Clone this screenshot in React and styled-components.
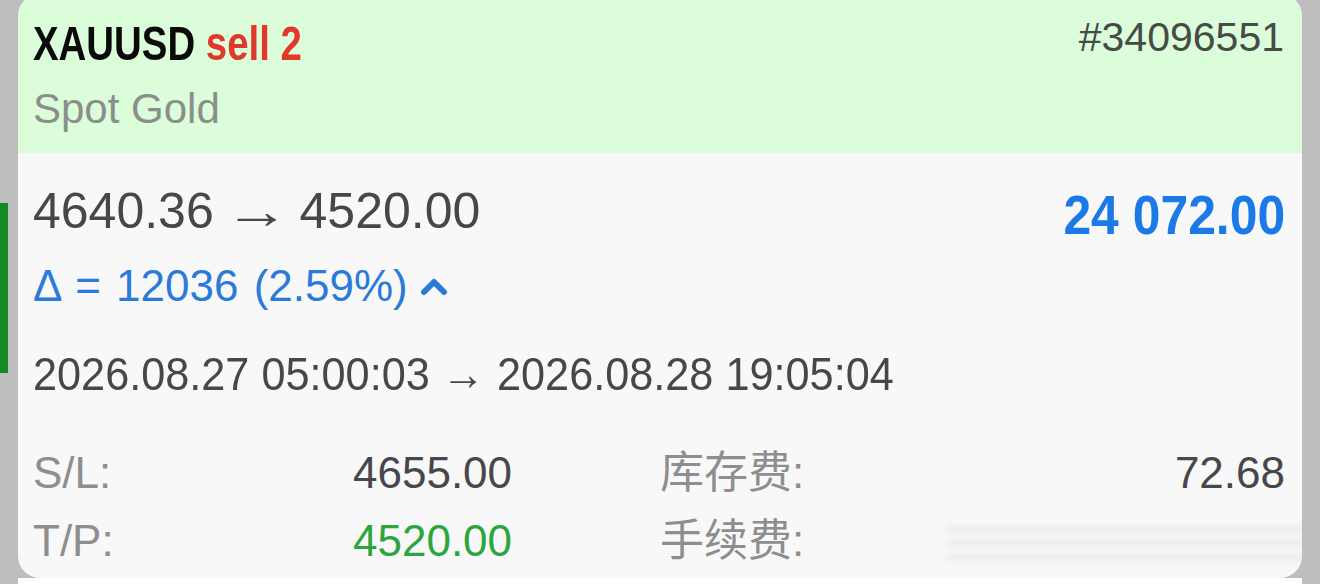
import React from "react";
import styled, { createGlobalStyle } from "styled-components";

const GlobalStyle = createGlobalStyle`
  html, body {
    margin: 0;
    padding: 0;
    background: #bebebe;
    overflow: hidden;
  }
`;

const Page = styled.div`
  display: flex;
  width: 1320px;
  height: 584px;
  overflow: hidden;
  font-family: "Liberation Sans", Arial, sans-serif;
`;

const SideStrip = styled.div`
  width: 18px;
  flex: none;
`;

const StatusBar = styled.div`
  width: 8px;
  height: 170px;
  margin-top: 203px;
  background: #138a24;
`;

const Column = styled.div`
  width: 1284px;
  flex: none;
  display: flex;
  flex-direction: column;
`;

const Card = styled.div`
  margin-top: -6px;
  height: 584px;
  flex: none;
  border-radius: 22px;
  overflow: hidden;
  background: #f8f8f8;
  display: flex;
  flex-direction: column;
`;

const Header = styled.div`
  background: #dcfdd9;
  height: 159px;
  flex: none;
  box-sizing: border-box;
  padding: 22px 18px 0 15px;
  display: flex;
  justify-content: space-between;
`;

const TitleBlock = styled.div`
  display: flex;
  flex-direction: column;
`;

const Title = styled.div`
  display: inline-block;
  font-weight: 700;
  font-size: 48px;
  line-height: 56px;
  color: #0a0a0a;
  white-space: nowrap;
  transform: scaleX(0.8);
  transform-origin: left center;
`;

const Side = styled.span`
  color: #e0392b;
`;

const Subtitle = styled.div`
  font-size: 42px;
  line-height: 50px;
  color: #8b8f8b;
  margin-top: 12px;
`;

const Ticket = styled.div`
  font-size: 41px;
  line-height: 50px;
  color: #454b45;
  margin-top: -4px;
`;

const Body = styled.div`
  padding: 30px 17px 0 15px;
  display: flex;
  flex-direction: column;
`;

const PriceRow = styled.div`
  display: flex;
  justify-content: space-between;
  align-items: flex-start;
`;

const Prices = styled.div`
  font-size: 50px;
  line-height: 56px;
  color: #47474b;
  white-space: nowrap;
`;

const Arrow = styled.span`
  display: inline-block;
  margin: 0 4px;
  transform: scaleX(1.3);
`;

const Profit = styled.div`
  font-weight: 700;
  font-size: 56px;
  line-height: 64px;
  color: #1b7ae6;
  white-space: nowrap;
  transform: scaleX(0.89);
  transform-origin: right center;
`;

const Delta = styled.div`
  display: flex;
  align-items: center;
  gap: 12px;
  font-size: 44px;
  line-height: 50px;
  word-spacing: 3px;
  color: #2a7bd9;
  margin-top: 14px;
`;

const Times = styled.div`
  display: inline-block;
  font-size: 46px;
  line-height: 50px;
  color: #47474b;
  white-space: nowrap;
  transform: scaleX(0.94);
  transform-origin: left center;
  margin-top: 38px;
`;

const Details = styled.div`
  display: grid;
  grid-template-columns: 320px 307px 1fr auto;
  align-items: center;
  margin-top: 50px;
  row-gap: 20px;
`;

const Label = styled.div`
  font-family: "Liberation Sans", "Noto Sans CJK SC", sans-serif;
  font-size: 44px;
  line-height: 48px;
  color: #8e8e8e;
`;

const Value = styled.div`
  font-size: 44px;
  line-height: 48px;
  color: ${(p) => p.$color || "#47474b"};
  text-align: ${(p) => (p.$right ? "right" : "left")};
`;

const Blurred = styled.div`
  width: 360px;
  height: 44px;
  margin-right: -22px;
  background: repeating-linear-gradient(
    180deg,
    #f8f8f8 0px,
    #f8f8f8 7px,
    #d4d4d4 10px,
    #f8f8f8 14px
  );
  filter: blur(3px);
  opacity: 0.7;
`;

const NextItem = styled.div`
  height: 20px;
  background: #ffffff;
  padding-left: 20px;
  font-size: 40px;
  line-height: 40px;
  color: #111;
  overflow: hidden;
`;

function Chevron() {
  return (
    <svg width="28" height="20" viewBox="0 0 28 20">
      <polyline
        points="4,16 14,6 24,16"
        fill="none"
        stroke="#2a7bd9"
        strokeWidth="6"
        strokeLinecap="round"
        strokeLinejoin="round"
      />
    </svg>
  );
}

export default function App() {
  return (
    <>
      <GlobalStyle />
      <Page>
        <SideStrip>
          <StatusBar />
        </SideStrip>
        <Column>
          <Card>
            <Header>
              <TitleBlock>
                <Title>
                  XAUUSD <Side>sell 2</Side>
                </Title>
                <Subtitle>Spot Gold</Subtitle>
              </TitleBlock>
              <Ticket>#34096551</Ticket>
            </Header>
            <Body>
              <PriceRow>
                <Prices>
                  4640.36 <Arrow>→</Arrow> 4520.00
                </Prices>
                <Profit>24 072.00</Profit>
              </PriceRow>
              <Delta>
                <span>Δ = 12036 (2.59%)</span>
                <Chevron />
              </Delta>
              <div>
                <Times>2026.08.27 05:00:03 → 2026.08.28 19:05:04</Times>
              </div>
              <Details>
                <Label>S/L:</Label>
                <Value>4655.00</Value>
                <Label>库存费:</Label>
                <Value $right>72.68</Value>
                <Label>T/P:</Label>
                <Value $color="#2aa63c">4520.00</Value>
                <Label>手续费:</Label>
                <Blurred />
              </Details>
            </Body>
          </Card>
          <NextItem>AUDUSD</NextItem>
        </Column>
      </Page>
    </>
  );
}
